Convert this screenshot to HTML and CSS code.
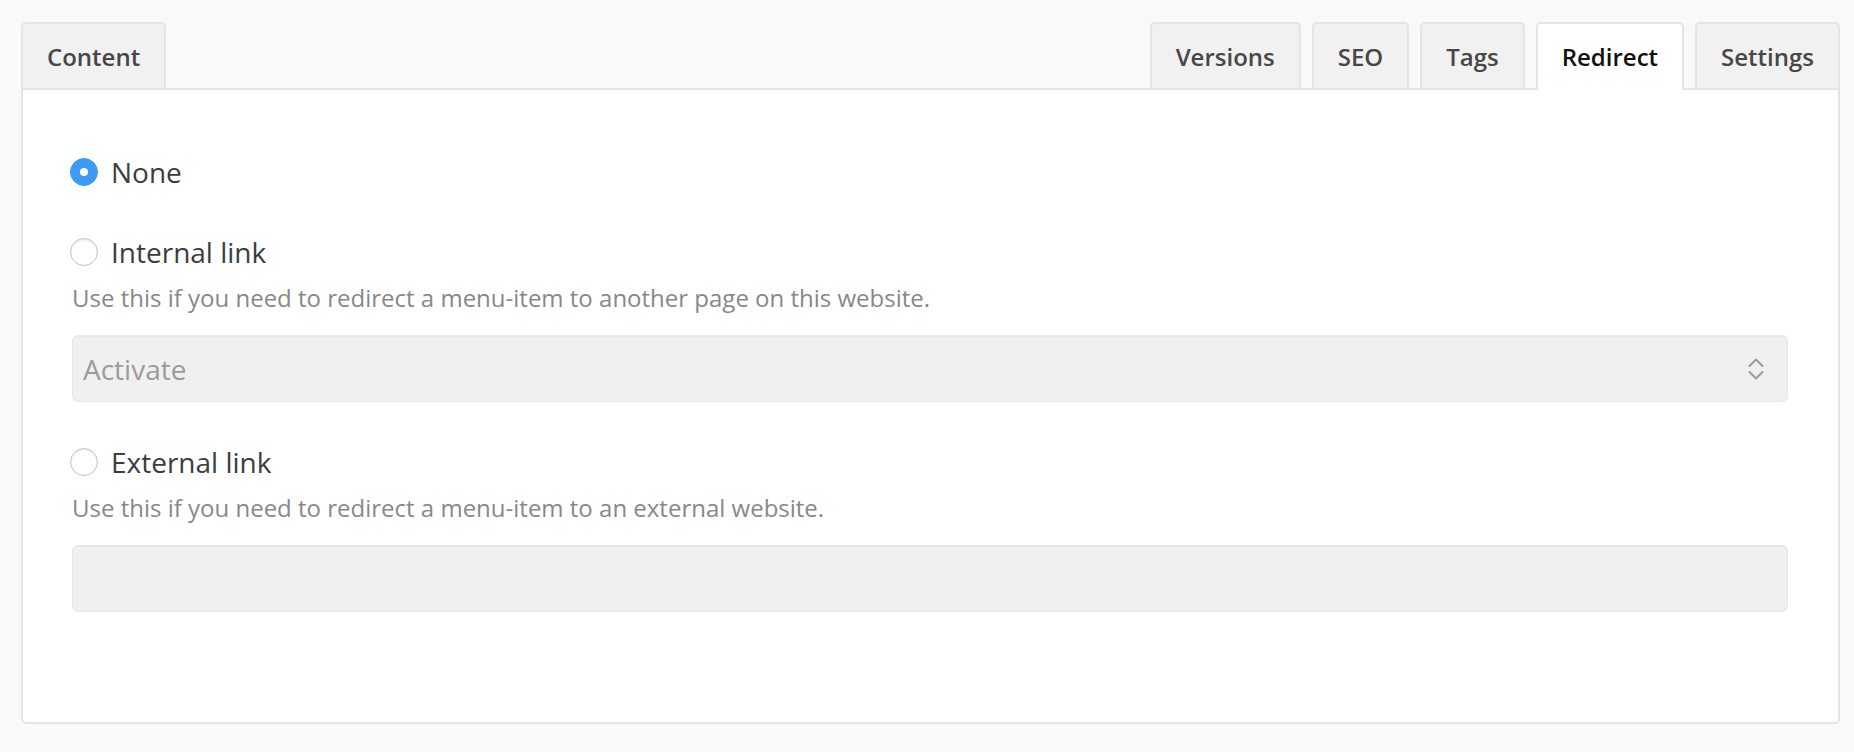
FILE: index.html
```html
<!DOCTYPE html>
<html lang="en">
<head>
<meta charset="utf-8">
<title>Redirect</title>
<link rel="stylesheet" href="styles.css">
</head>
<body>
<div class="page">
  <div class="tabs">
    <div class="tab-group">
      <div class="tab">Content</div>
    </div>
    <div class="tab-group">
      <div class="tab">Versions</div>
      <div class="tab">SEO</div>
      <div class="tab">Tags</div>
      <div class="tab active">Redirect</div>
      <div class="tab">Settings</div>
    </div>
  </div>
  <div class="panel">
    <div class="group">
      <label class="option"><span class="radio checked"></span><span class="option-label">None</span></label>
    </div>
    <div class="group">
      <label class="option"><span class="radio"></span><span class="option-label">Internal link</span></label>
      <p class="help">Use this if you need to redirect a menu-item to another page on this website.</p>
      <div class="field select">
        <span class="placeholder">Activate</span>
        <svg class="chevrons" width="16" height="24" viewBox="0 0 16 24" fill="none" stroke="#9a9a9a" stroke-width="2" stroke-linecap="round" stroke-linejoin="round"><path d="M1.5 9 L8 2.5 L14.5 9"/><path d="M1.5 15 L8 21.5 L14.5 15"/></svg>
      </div>
    </div>
    <div class="group">
      <label class="option"><span class="radio"></span><span class="option-label">External link</span></label>
      <p class="help">Use this if you need to redirect a menu-item to an external website.</p>
      <div class="field"></div>
    </div>
  </div>
</div>
</body>
</html>
```

FILE: styles.css
```css
html, body {
  margin: 0;
  padding: 0;
  background: #f9f9f9;
}

body {
  font-family: "Open Sans", "Noto Sans", sans-serif;
  color: #3a3a3a;
}

.page {
  padding: 22px 14px 0 21px;
}

.tabs {
  display: flex;
  justify-content: space-between;
  align-items: flex-start;
  position: relative;
  z-index: 1;
  height: 66px;
}

.tab-group {
  display: flex;
  gap: 11px;
}

.tab {
  height: 66px;
  box-sizing: border-box;
  padding: 0 24px;
  display: flex;
  align-items: center;
  background: #f1f1f1;
  border: 2px solid #e4e4e4;
  border-bottom: none;
  border-radius: 5px 5px 0 0;
  font-size: 24px;
  font-weight: 600;
  color: #474747;
}

.tab.active {
  background: #ffffff;
  color: #111111;
  height: 68px;
  padding-bottom: 2px;
}

.panel {
  background: #ffffff;
  border: 2px solid #e4e4e4;
  border-radius: 0 0 5px 5px;
  padding: 62px 50px 110px 49px;
}

.group + .group {
  margin-top: 40px;
}

.option {
  display: flex;
  align-items: center;
  height: 40px;
}

.radio {
  width: 28px;
  height: 28px;
  box-sizing: border-box;
  border-radius: 50%;
  border: 1px solid #c4c4c4;
  background: #ffffff;
  box-shadow: inset 0 1px 2px rgba(0, 0, 0, 0.12);
  margin-left: -2px;
  display: flex;
  align-items: center;
  justify-content: center;
}

.radio.checked {
  background: #3d9bf6;
  border-color: #3d9bf6;
  box-shadow: none;
}

.radio.checked::after {
  content: "";
  width: 8px;
  height: 8px;
  border-radius: 50%;
  background: #ffffff;
}

.option-label {
  margin-left: 13px;
  font-size: 28px;
  color: #3d3d3d;
}

.help {
  margin: 10px 0 0 0;
  font-size: 24px;
  line-height: 32px;
  color: #888888;
}

.field {
  margin-top: 21px;
  height: 67px;
  box-sizing: border-box;
  background: #f0f0f0;
  border: 1px solid #e8e8e8;
  border-radius: 6px;
  box-shadow: inset 0 1px 1px rgba(0, 0, 0, 0.04);
}

.select {
  display: flex;
  align-items: center;
  justify-content: space-between;
  padding: 0 23px 0 10px;
}

.placeholder {
  font-size: 28px;
  color: #9b9b9b;
}

.chevrons {
  display: block;
}
```
